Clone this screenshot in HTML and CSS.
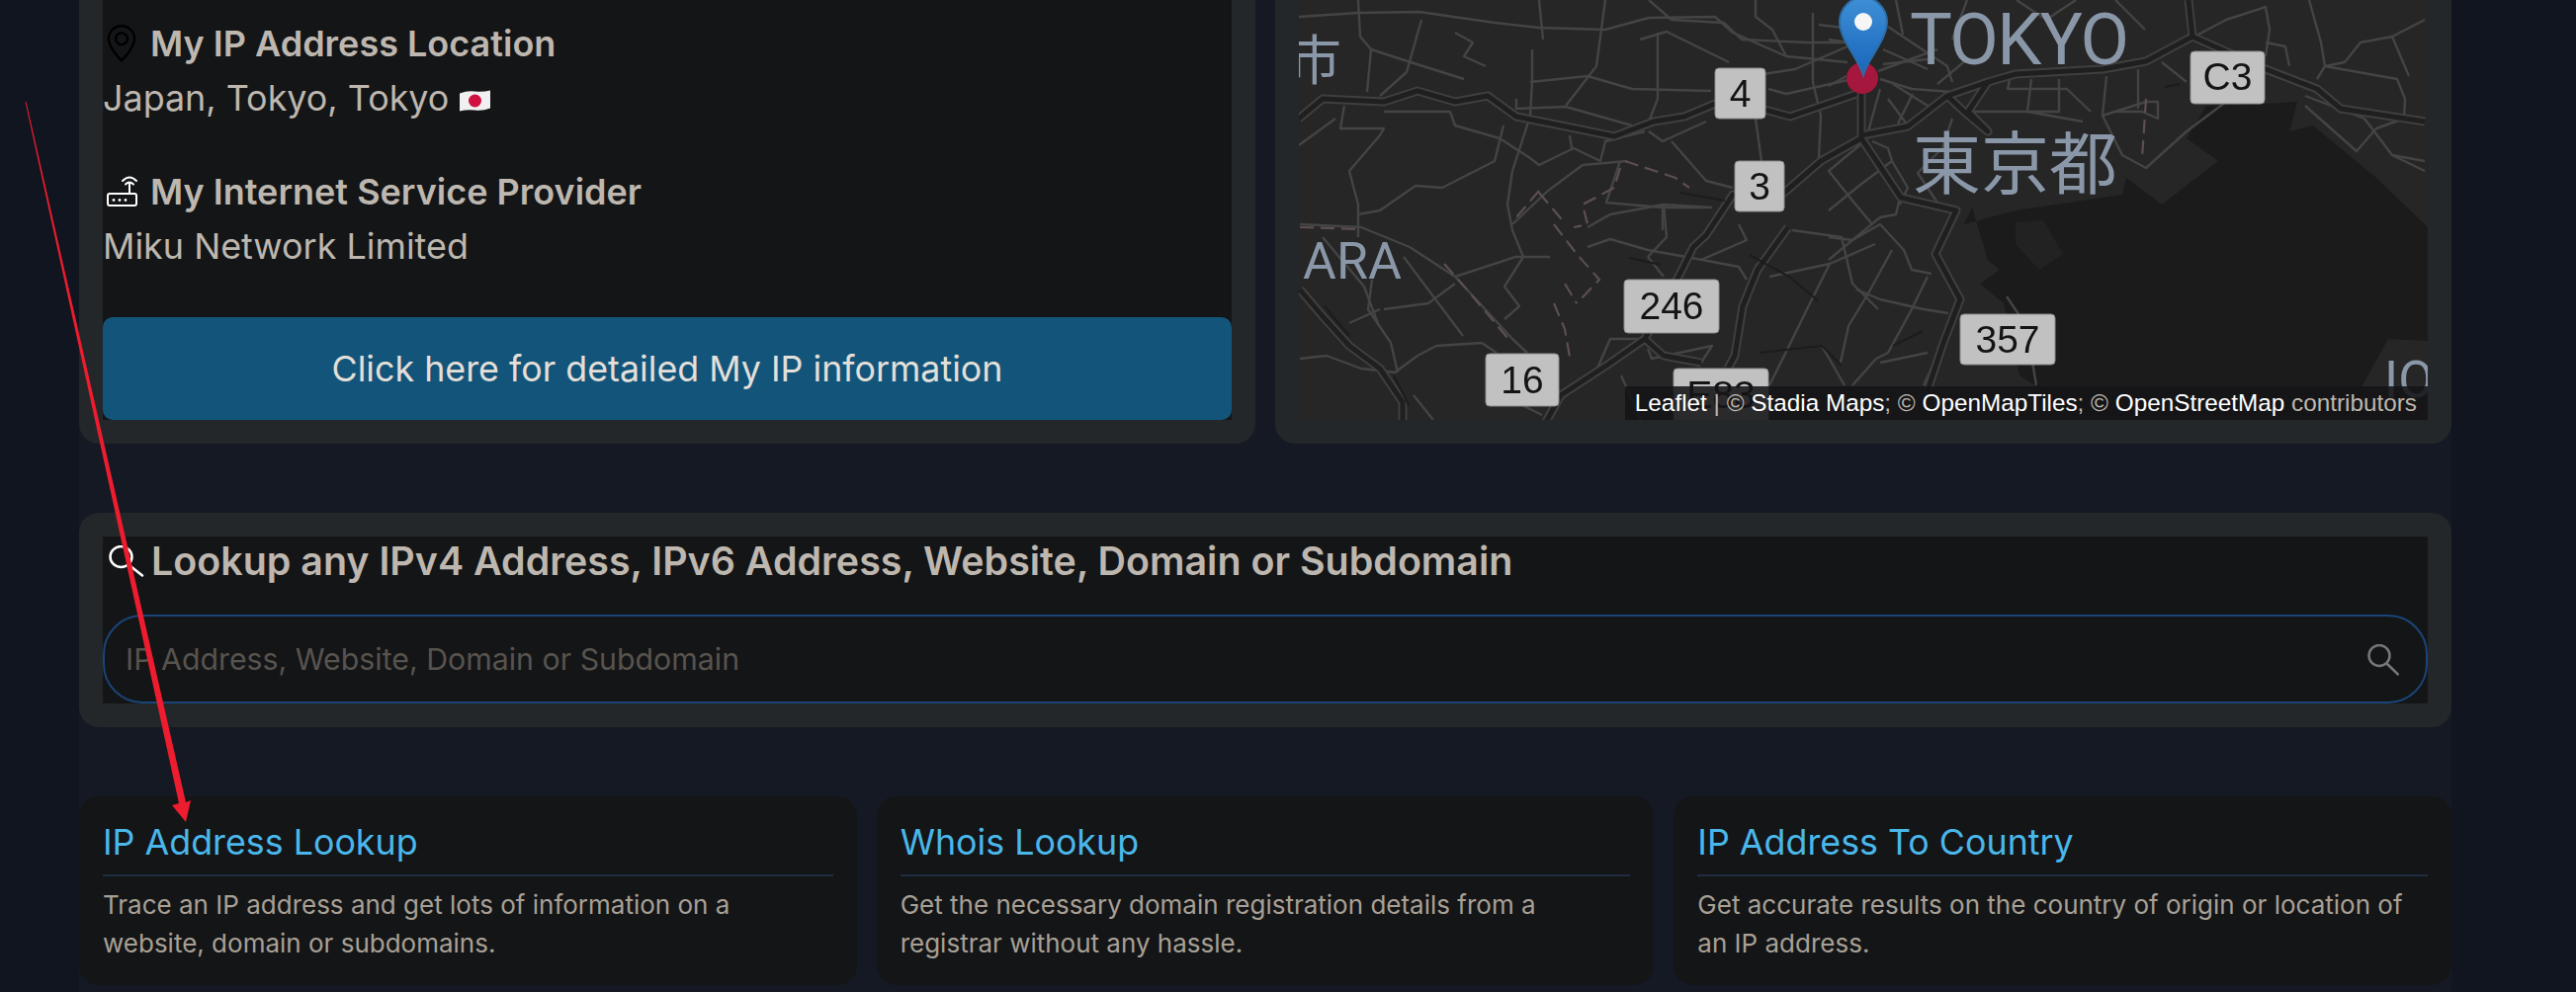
FILE: index.html
```html
<!DOCTYPE html>
<html lang="en">
<head>
    <meta charset="UTF-8">
    <meta name="viewport" content="width=device-width, initial-scale=1.0">
    <title>My IP Address</title>
    <link rel="stylesheet" href="styles.css">
</head>
<body>
    <div class="wrap">
        <div class="top-row">
            <div class="panel">
                <div class="info">
                    <div class="info-block">
                        <h3 class="info-title">
                            <svg class="info-icon pin" viewBox="0 0 16 16" fill="currentColor"><path d="M12.166 8.94c-.524 1.062-1.234 2.12-1.96 3.07A32 32 0 0 1 8 14.58a32 32 0 0 1-2.206-2.57c-.726-.95-1.436-2.008-1.96-3.07C3.304 7.867 3 6.862 3 6a5 5 0 0 1 10 0c0 .862-.305 1.867-.834 2.94M8 16s6-5.686 6-10A6 6 0 0 0 2 6c0 4.314 6 10 6 10"/><path d="M8 8a2 2 0 1 1 0-4 2 2 0 0 1 0 4m0 1a3 3 0 1 0 0-6 3 3 0 0 0 0 6"/></svg>
                            My IP Address Location
                        </h3>
                        <p class="info-text">Japan, Tokyo, Tokyo
                            <svg class="flag" viewBox="0 0 33 22"><path d="M1 3.500Q9 0.500 16.500 1.500T32 0.500V18.500Q24 21.500 16.500 20.500T1 21.500Z" fill="#f1f0f0"/><circle cx="16.500" cy="11" r="6.500" fill="#d0103f"/></svg>
                        </p>
                    </div>
                    <div class="info-block">
                        <h3 class="info-title">
                            <svg class="info-icon router" viewBox="0 0 38 38" fill="none" stroke="#fff" stroke-width="2" stroke-linecap="round"><rect x="5" y="21" width="29" height="12" rx="2"/><path d="M27 11V21M20 8Q27 1 34 8M23 11.500Q27 7.500 31 11.500"/><g fill="#fff" stroke="none"><circle cx="11" cy="27.500" r="1.400"/><circle cx="17" cy="27.500" r="1.400"/><circle cx="23" cy="27.500" r="1.400"/></g></svg>
                            My Internet Service Provider
                        </h3>
                        <p class="info-text">Miku Network Limited</p>
                    </div>
                    <a class="detail-btn" href="#">Click here for detailed My IP information</a>
                </div>
            </div>

            <div class="panel">
                <div class="map">
                    <svg class="map-svg" viewBox="1314 0 1142 425">
                        <defs>
                            <g id="majorRoads">
                                <path d="M1314 120 1338 100 1400 103 1434 92 1472 103 1505 97 1534 118 1584 128 1633 138 1673 123 1704 118 1735 105 1789 112 1811 118 1878 95"/>
                                <path d="M1883 95 1883 140 1842 163 1805 195 1753 197 1726 238 1713 250 1698 280 1664 343 1625 370 1579 400 1564 427"/>
                                <path d="M1664 343 1683 360 1721 367"/>
                                <path d="M1809 230 1778 273 1763 310 1755 360 1748 373"/>
                                <path d="M1883 140 1923 200 1979 213 1958 257 1983 303 1966 347 1950 395"/>
                                <path d="M1883 137 1930 128 1970 97 2011 83 2039 75 2127 70 2171 62 2218 37 2214 0"/>
                                <path d="M2218 37 2292 70 2344 90 2368 110 2453 123"/>
                                <path d="M1970 97 1987 113 2011 133 1991 113 2011 83"/>
                                <path d="M1315 293 1338 320 1365 350 1396 373 1419 407 1419 425"/>
                            </g>
                        </defs>

                        <rect class="land" x="1314" y="0" width="1142" height="425"/>
                        <path class="water" d="M2232 107 2292 105 2324 103 2316 133 2340 127 2404 180 2456 230 2456 345 2416 343 2390 390 2400 425 2100 425 2059 390 2043 380 2027 307 2003 287 2023 273 2011 263 1995 210 1987 227 2039 213 2147 197 2151 180 2187 207 2244 163 2212 140Z"/>
                        <path class="islet" d="M2039 225 2067 223 2087 257 2063 273 2039 247Z"/>

                        <g class="minor">
                            <path d="M1314 17 1374 13 1436 12 1512 23 1557 28 1624 30 1668 18 1735 17 1753 33 1807 57 1869 63"/>
                            <path d="M1374 0 1376 37 1387 50 1427 63 1481 80"/>
                            <path d="M1438 20 1423 73 1396 97"/>
                            <path d="M1387 50 1383 93"/>
                            <path d="M1472 33 1490 43 1481 57 1503 67"/>
                            <path d="M1550 50 1550 83 1548 117 1543 133 1530 173 1525 207 1530 233 1541 260 1522 290 1537 310 1522 323"/>
                            <path d="M1557 0 1561 40"/>
                            <path d="M1624 0 1615 67 1584 107"/>
                            <path d="M1548 83 1606 77 1651 90 1731 92"/>
                            <path d="M1677 33 1677 100 1668 123"/>
                            <path d="M1659 40 1686 32 1749 63"/>
                            <path d="M1668 0 1691 20 1744 23 1762 40 1829 43 1869 43"/>
                            <path d="M1776 0 1776 17 1793 30 1807 57"/>
                            <path d="M1534 100 1534 110 1584 108 1651 127"/>
                            <path d="M1360 107 1356 130 1400 130 1396 137 1365 173 1374 207 1374 240"/>
                            <path d="M1400 113 1467 113 1472 127 1517 140 1548 160 1557 167 1592 150 1619 163 1624 143 1664 133"/>
                            <path d="M1314 147 1351 120"/>
                            <path d="M1521 127 1512 163 1459 190 1432 188 1396 213 1374 217"/>
                            <path d="M1776 120 1782 163"/>
                            <path d="M1668 133 1682 143 1726 123"/>
                            <path d="M1691 143 1726 183 1753 190"/>
                            <path d="M1588 137 1590 150"/>
                            <path d="M1834 13 1834 83 1842 117 1840 160"/>
                            <path d="M1784 75 1816 70 1869 47"/>
                            <path d="M1789 90 1807 95 1874 80"/>
                            <path d="M1646 163 1601 167 1566 193 1530 227"/>
                            <path d="M1639 163 1625 205 1682 210 1682 233"/>
                            <path d="M1682 210 1726 210"/>
                            <path d="M1315 227 1377 230 1426 250 1472 280 1530 343 1545 357"/>
                            <path d="M1472 280 1533 260 1568 260"/>
                            <path d="M1400 313 1445 307 1472 287"/>
                            <path d="M1365 327 1396 313"/>
                            <path d="M1388 283 1384 313 1407 347 1414 377"/>
                            <path d="M1315 363 1342 360 1377 373 1411 377 1434 360 1453 350 1499 347 1514 357"/>
                            <path d="M1606 230 1629 217 1683 207 1732 210"/>
                            <path d="M1606 250 1629 242 1667 253 1706 260 1759 270 1767 283"/>
                            <path d="M1667 260 1683 280"/>
                            <path d="M1683 207 1686 240 1667 260"/>
                            <path d="M1759 227 1767 243 1721 263"/>
                            <path d="M1790 280 1851 267 1897 247"/>
                            <path d="M1813 233 1863 240 1874 287 1900 313"/>
                            <path d="M1851 267 1828 313 1805 360 1790 390"/>
                            <path d="M1664 343 1629 343 1614 377"/>
                            <path d="M1667 353 1671 363 1732 350 1721 367"/>
                            <path d="M1843 350 1866 390"/>
                            <path d="M1850 240 1874 243 1902 220 1918 217 1922 200"/>
                            <path d="M1850 263 1874 243 1902 227 1926 253 1934 273 1954 277"/>
                            <path d="M1914 253 1890 297 1870 330 1862 367"/>
                            <path d="M1878 293 1902 303 1946 313 1971 317"/>
                            <path d="M1950 280 1934 313 1910 357 1898 363 1874 390"/>
                            <path d="M1902 367 1950 357"/>
                            <path d="M1966 347 1946 390"/>
                            <path d="M1850 40 1870 43M1910 27 1934 43 1970 67 1975 83"/>
                            <path d="M1850 87 1868 77M1902 80 1934 90 1975 93"/>
                            <path d="M1902 90 1890 133M1910 100 1930 127"/>
                            <path d="M1905 50 1950 70M1905 65 1950 60M1918 0 1925 35"/>
                            <path d="M1900 72 1960 50M1915 85 1955 110M1935 95 1920 125M1960 85 1990 60"/>
                            <path d="M2035 73 2031 90 2091 90 2115 113"/>
                            <path d="M2055 80 2051 113 1987 113"/>
                            <path d="M2083 80 2083 113 2051 113 2107 123"/>
                            <path d="M2131 77 2127 117 2171 103 2183 103 2183 120 2167 113 2139 113"/>
                            <path d="M2163 70 2163 110"/>
                            <path d="M2187 63 2212 83"/>
                            <path d="M2127 117 2147 157 2171 170 2212 133 2252 103"/>
                            <path d="M2220 37 2252 20 2292 7 2296 30 2292 57"/>
                            <path d="M2292 43 2312 47 2316 67"/>
                            <path d="M2336 0 2348 43 2352 67 2344 80"/>
                            <path d="M2352 67 2372 63 2388 43 2420 37 2453 20"/>
                            <path d="M2352 67 2425 80 2433 100 2432 120"/>
                            <path d="M2420 37 2437 77"/>
                            <path d="M2332 97 2392 120 2420 157 2453 163"/>
                            <path d="M2332 107 2384 153 2404 130 2432 120"/>
                            <path d="M2420 157 2453 173"/>
                            <path d="M1886 143 1850 173 1874 203 1894 227"/>
                            <path d="M1894 143 1910 150 1914 163 1882 187 1850 213"/>
                            <path d="M1914 163 1930 190 1922 207"/>
                            <path d="M1880 0 1878 60M1840 25 1880 30"/>
                            <path d="M1975 120 1965 150 1940 175 1960 205"/>
                            <path d="M1990 0 1975 40M2040 0 2070 20 2100 0"/>
                            <path d="M2140 0 2170 30M2250 60 2290 80"/>
                            <path d="M1520 400 1560 420M1640 380 1660 425M1430 400 1450 425"/>
                            <path d="M1338 240 1380 290 1395 330"/>
                            <path d="M1420 260 1480 340"/>
                            <path d="M2030 300 2050 330 2060 390"/>
                        </g>

                        <g class="trail">
                            <path d="M1644 163 1695 180 1709 190"/>
                            <path d="M1639 170 1633 190 1601 207 1606 227 1592 230"/>
                            <path d="M1557 193 1534 220M1557 195 1584 227"/>
                            <path d="M1572 227 1595 257 1618 283 1595 307M1583 287 1595 307M1572 307 1583 333 1589 367"/>
                            <path d="M1461 267 1484 293 1526 343"/>
                            <path d="M1315 230 1377 232"/>
                            <path d="M2171 100 2167 160"/>
                        </g>

                        <use href="#majorRoads" class="major-casing"/>
                        <use href="#majorRoads" class="major-inner"/>
                        <path class="rail" d="M1700 195 1745 203M1648 261 1680 268M1770 258 1810 280 1840 305M2190 88 2205 85M1340 310 1365 340M1410 380 1425 410M1780 357 1843 350 1863 370M1915 350 1945 335"/>

                        <text class="place" x="1932" y="65" textLength="222">TOKYO</text>
                        <text class="place place-cjk" x="1935" y="191">東京都</text>
                        <text class="place place-cjk place-small" x="1303" y="81">市</text>
                        <text class="place place-md" x="1318" y="282">ARA</text>
                        <text class="place place-md" x="2412" y="402">IO</text>

                        <g class="shield">
                            <rect x="1735" y="69" width="51" height="51" rx="4"/><text x="1760.500" y="108">4</text>
                            <rect x="1755" y="163" width="50" height="51" rx="4"/><text x="1780" y="202">3</text>
                            <rect x="2216" y="52" width="75" height="53" rx="4"/><text x="2253.500" y="91">C3</text>
                            <rect x="1643" y="283" width="96" height="54" rx="4"/><text x="1691" y="323">246</text>
                            <rect x="1503" y="358" width="74" height="53" rx="4"/><text x="1540" y="398">16</text>
                            <rect x="1693" y="373" width="96" height="60" rx="4"/><text x="1741" y="413">E83</text>
                            <rect x="1983" y="318" width="96" height="51" rx="4"/><text x="2031" y="357">357</text>
                        </g>

                        <circle class="ip-dot" cx="1884" cy="79" r="16"/>
                        <defs>
                            <linearGradient id="pinFill" x1="0" y1="0" x2="0" y2="1">
                                <stop offset="0" stop-color="#3f8fd6"/>
                                <stop offset="1" stop-color="#1766bb"/>
                            </linearGradient>
                        </defs>
                        <path class="pin-body" d="M1885 76C1880 59 1861 40 1861 22 1861 9 1872-3 1885-3 1898-3 1909 9 1909 22 1909 40 1890 59 1885 76Z"/>
                        <circle class="pin-hole" cx="1885" cy="22" r="9"/>
                    </svg>
                    <div class="attribution"><span class="attr-link">Leaflet</span> <span class="attr-sep">|</span> © <span class="attr-link">Stadia Maps</span>; © <span class="attr-link">OpenMapTiles</span>; © <span class="attr-link">OpenStreetMap</span> contributors</div>
                </div>
            </div>
        </div>

        <div class="panel search-panel">
            <div class="search-inner">
                <h2 class="search-title">
                    <svg class="search-icon" viewBox="0 0 36 32" fill="none" stroke="#fff" stroke-width="2.500" stroke-linecap="round"><ellipse cx="12.500" cy="11.500" rx="11" ry="10.500"/><path d="M20 19.500 34 30.500"/></svg>
                    Lookup any IPv4 Address, IPv6 Address, Website, Domain or Subdomain
                </h2>
                <div class="search-box">
                    <input class="search-input" type="text" placeholder="IP Address, Website, Domain or Subdomain">
                    <svg class="search-btn" viewBox="0 0 32 32" fill="none" stroke="#777" stroke-width="2.500"><circle cx="12" cy="11.500" r="10.500"/><path d="M19.500 19.500 31.500 31"/></svg>
                </div>
            </div>
        </div>

        <div class="tools">
            <div class="tool">
                <h4 class="tool-title">IP Address Lookup</h4>
                <p class="tool-text">Trace an IP address and get lots of information on a website, domain or subdomains.</p>
            </div>
            <div class="tool">
                <h4 class="tool-title">Whois Lookup</h4>
                <p class="tool-text">Get the necessary domain registration details from a registrar without any hassle.</p>
            </div>
            <div class="tool">
                <h4 class="tool-title">IP Address To Country</h4>
                <p class="tool-text">Get accurate results on the country of origin or location of an IP address.</p>
            </div>
        </div>
    </div>

    <svg class="arrow" viewBox="0 0 260 1004"><polygon points="25.500,103 26.500,103 188,812 193,810 188,832 174,815 181,813"/></svg>
</body>
</html>
```

FILE: styles.css
```css
* {
    box-sizing: border-box;
}
html, body {
    margin: 0;
    height: 1004px;
    overflow: hidden;
}
body {
    font-family: Inter, "Noto Sans", sans-serif;
    background-color: #10151f;
    color: #bdb7af;
    position: relative;
}
.wrap {
    width: 2400px;
    height: 1004px;
    margin-left: 80px;
    background-color: #141924;
}
.top-row {
    display: grid;
    grid-template-columns: 1fr 1fr;
    gap: 20px;
}
.panel {
    background-color: #23272a;
    border-radius: 0 0 20px 20px;
    padding: 0 24px 24px;
}
.info {
    display: flex;
    flex-direction: column;
    height: 425px;
    background-color: #141517;
}
.info-block {
    height: 150px;
    padding-top: 25px;
}
.info-title {
    display: flex;
    align-items: center;
    gap: 10px;
    margin: 0;
    height: 38px;
    font-size: 36px;
    font-weight: 600;
    line-height: 38px;
}
.info-icon {
    width: 38px;
    height: 38px;
    flex-shrink: 0;
}
.pin {
    color: #000;
}
.info-text {
    margin: 14px 0 0;
    font-size: 35.900px;
    line-height: 44px;
}
.flag {
    width: 33px;
    height: 22px;
    vertical-align: -1px;
}
.detail-btn {
    display: flex;
    align-items: center;
    justify-content: center;
    height: 104px;
    margin-top: auto;
    background-color: #13557a;
    border-radius: 10px;
    color: #e3dfd9;
    font-size: 35.800px;
    text-decoration: none;
}

/* map */
.map {
    position: relative;
    height: 425px;
    overflow: hidden;
    background-color: #262626;
}
.map-svg {
    display: block;
    width: 100%;
    height: 100%;
    filter: blur(0.6px);
}
.land {
    fill: #262626;
}
.water {
    fill: #1b1b1b;
}
.islet {
    fill: #222;
}
.minor path {
    fill: none;
    stroke: #444;
    stroke-width: 2.400;
    stroke-linejoin: round;
}
.trail path {
    fill: none;
    stroke: #5c4e52;
    stroke-width: 2.200;
    stroke-dasharray: 14 7;
}
.major-casing {
    fill: none;
    stroke: #3f3f3f;
    stroke-width: 9;
    stroke-linejoin: round;
}
.major-inner {
    fill: none;
    stroke: #1f1f1f;
    stroke-width: 5;
    stroke-linejoin: round;
}
.rail {
    fill: none;
    stroke: #1c1c1c;
    stroke-width: 2;
}
.place {
    fill: #8a97a8;
    font-family: Roboto, sans-serif;
    font-size: 72px;
    font-weight: 400;
}
.place-cjk {
    font-family: "Noto Sans CJK JP", sans-serif;
    font-size: 69px;
}
.place-small {
    font-size: 54px;
}
.place-md {
    font-size: 52px;
}
.shield rect {
    fill: #c1c1c1;
    stroke: #8d8d8d;
    stroke-width: 1;
}
.shield text {
    fill: #141414;
    font-family: "Liberation Sans", Arial, sans-serif;
    font-size: 39px;
    text-anchor: middle;
}
.ip-dot {
    fill: #a5173c;
}
.pin-body {
    fill: url(#pinFill);
    stroke: #2c6ca6;
    stroke-width: 2;
}
.pin-hole {
    fill: #f6f6f6;
}
.attribution {
    position: absolute;
    right: 0;
    bottom: 0;
    height: 34px;
    padding: 0 11px 0 10px;
    background-color: rgba(20, 21, 23, 0.88);
    color: #bdb7af;
    font-family: "Liberation Sans", Arial, sans-serif;
    font-size: 24.300px;
    line-height: 34px;
    white-space: nowrap;
}
.attr-link {
    color: #fff;
}

/* search */
.search-panel {
    margin-top: 70px;
    padding: 24px;
    border-radius: 20px;
}
.search-inner {
    display: flex;
    flex-direction: column;
    justify-content: space-between;
    height: 169px;
    background-color: #141517;
}
.search-title {
    display: flex;
    align-items: center;
    gap: 7px;
    margin: 0;
    padding: 1px 0 0 6px;
    font-size: 39.400px;
    font-weight: 600;
    line-height: 48px;
}
.search-icon {
    width: 36px;
    height: 32px;
    flex-shrink: 0;
}
.search-box {
    position: relative;
}
.search-input {
    display: block;
    width: 100%;
    height: 90px;
    padding: 0 80px 0 21px;
    background-color: #141517;
    border: 2px solid #1a4578;
    border-radius: 40px;
    color: #bdb7af;
    font-family: inherit;
    font-size: 30.300px;
    outline: none;
}
.search-input::placeholder {
    color: #57534e;
    opacity: 1;
}
.search-btn {
    position: absolute;
    right: 29px;
    top: 30px;
    width: 32px;
    height: 32px;
}

/* tool cards */
.tools {
    display: grid;
    grid-template-columns: repeat(3, 1fr);
    gap: 20px;
    margin-top: 70px;
}
.tool {
    height: 191px;
    padding: 24px;
    background-color: #141517;
    border-radius: 20px;
}
.tool-title {
    margin: 0;
    padding-bottom: 11px;
    border-bottom: 2px solid #1e2d40;
    color: #4ab7ea;
    font-size: 35.800px;
    font-weight: 400;
    line-height: 44px;
}
.tool-text {
    margin: 9px 0 0;
    color: #a8a095;
    font-size: 26px;
    line-height: 39px;
}

.arrow {
    position: absolute;
    left: 0;
    top: 0;
    width: 260px;
    height: 1004px;
    pointer-events: none;
}
.arrow polygon {
    fill: #ed1c2e;
}
```
